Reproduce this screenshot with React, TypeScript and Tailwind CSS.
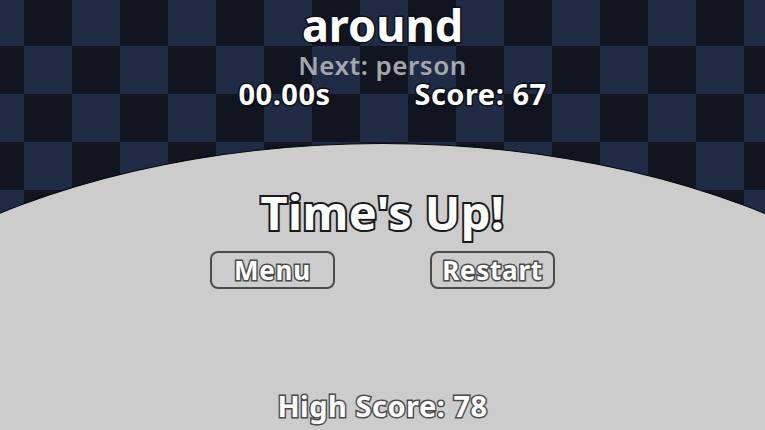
const outlineDark = "[paint-order:stroke_fill] [-webkit-text-stroke:3px_#0b0f18]";
const outlineBlack = "[paint-order:stroke_fill] [-webkit-text-stroke:4px_#1a1a1a]";
const outlineGray = "[paint-order:stroke_fill] [-webkit-text-stroke:3px_#4b4b4b]";

export default function App() {
  return (
    <div className="relative h-[430px] w-[765px] overflow-hidden bg-[#10151f] bg-[image:repeating-conic-gradient(#10151f_0_25%,#202c46_0_50%)] bg-[length:96px_96px] bg-[position:-24px_-2px] font-['Noto_Sans',sans-serif] font-bold">
      {/* grey dome */}
      <div className="absolute left-[-268px] top-[143px] h-[730px] w-[1300px] rounded-[50%] border-[1.5px] border-[#05070c] bg-[#cccccc]" />

      <div className="relative flex h-full flex-col items-center">
        <h1 className={`text-[45px] leading-[50px] text-white ${outlineDark}`}>
          around
        </h1>
        <p className="text-[26px] leading-[30px] font-semibold tracking-[0.5px] text-[#a4a7ad]">
          Next: person
        </p>
        <div className="grid w-[392px] grid-cols-2 text-center text-[29px] leading-[28px] tracking-[0.5px] text-white">
          <span className={outlineDark}>00.00s</span>
          <span className={outlineDark}>Score: 67</span>
        </div>

        <h2 className={`mt-[79px] text-[47px] leading-[50px] tracking-[0.4px] text-white ${outlineBlack}`}>
          Time's Up!
        </h2>
        <div className="mt-[14px] flex gap-[95px]">
          <button className={`h-[38px] w-[125px] rounded-lg border-2 border-[#4b4b4b] text-[26px] leading-none tracking-[0.75px] text-white ${outlineGray}`}>
            Menu
          </button>
          <button className={`h-[38px] w-[125px] rounded-lg border-2 border-[#4b4b4b] text-[26px] leading-none tracking-[0.75px] text-white ${outlineGray}`}>
            Restart
          </button>
        </div>

        <p className={`mt-auto mb-[8px] text-[29px] leading-[32px] tracking-[0.5px] text-white ${outlineGray}`}>
          High Score: 78
        </p>
      </div>
    </div>
  );
}
